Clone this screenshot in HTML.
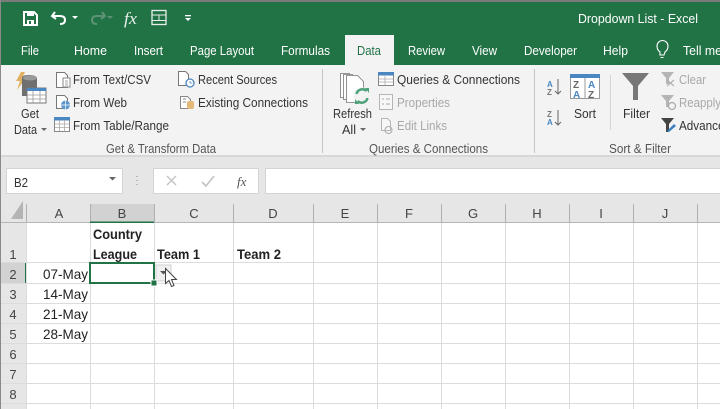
<!DOCTYPE html>
<html><head><meta charset="utf-8"><style>
html,body{margin:0;padding:0;background:#fff;width:720px;height:409px;overflow:hidden}
svg{display:block;filter:blur(.3px)}
text{font-family:"Liberation Sans",sans-serif;font-size:13px;fill:#333}
.w{fill:#fff}.g{fill:#a8a8a8}.l{fill:#555}.c{fill:#222;font-size:14px}.b{fill:#222;font-size:14px;font-weight:bold}.h{fill:#444;font-size:13px}
</style></head><body>
<svg width="720" height="409" viewBox="0 0 720 409" xmlns="http://www.w3.org/2000/svg">
<rect width="720" height="409" fill="#fff"/>
<rect width="720" height="2" fill="#7a7a7a"/>
<rect y="2" width="720" height="63" fill="#217346"/>
<rect x="0" y="0" width="1" height="409" fill="#8a8a8a"/>
<rect x="1" y="65" width="719" height="90" fill="#f3f3f3"/>
<rect x="1" y="155" width="719" height="41" fill="#e6e6e6"/>
<rect x="1" y="155" width="719" height="2" fill="#d8d8d8"/>
<rect x="345" y="35" width="49" height="30" fill="#f3f3f3"/>

<!-- QAT -->
<path d="M24 12h10l3 3v10H24z" fill="none" stroke="#fff" stroke-width="2"/><rect x="27" y="12" width="7" height="4" fill="#fff"/><rect x="27" y="20" width="7" height="5" fill="#fff"/><rect x="29" y="21" width="2" height="3" fill="#217346"/>
<path d="M55 12l-3 4 4 3M53 16h7q5 0 5 4t-5 4" fill="none" stroke="#fff" stroke-width="2"/><path d="M72 16h6l-3 3z" fill="#fff"/>
<path d="M102 12l3 4-4 3M104 16h-7q-5 0-5 4t5 4" fill="none" stroke="#5d9374" stroke-width="2"/><path d="M107 16h6l-3 3z" fill="#5d9374"/>
<text x="124" y="24" textLength="13" lengthAdjust="spacingAndGlyphs" style="font-family:'Liberation Serif',serif;font-style:italic;font-size:17px;fill:#e6efe9">fx</text>
<rect x="152" y="10.500" width="14" height="14" fill="none" stroke="#e6efe9" stroke-width="1.300"/><path d="M152 15h14M152 20.500h14M159 15v5.500" stroke="#e6efe9" stroke-width="1" fill="none"/>
<rect x="185" y="15" width="6" height="1.300" fill="#fff"/><path d="M185 18h6l-3 3z" fill="#fff"/>
<text class="w" x="578" y="23" textLength="120" lengthAdjust="spacingAndGlyphs">Dropdown List  -  Excel</text>

<!-- Tabs -->
<text class="w" x="21" y="55" textLength="18" lengthAdjust="spacingAndGlyphs">File</text>
<text class="w" x="74" y="55" textLength="33" lengthAdjust="spacingAndGlyphs">Home</text>
<text class="w" x="134" y="55" textLength="29" lengthAdjust="spacingAndGlyphs">Insert</text>
<text class="w" x="190" y="55" textLength="64" lengthAdjust="spacingAndGlyphs">Page Layout</text>
<text class="w" x="281" y="55" textLength="49" lengthAdjust="spacingAndGlyphs">Formulas</text>
<text x="357" y="55" textLength="24" lengthAdjust="spacingAndGlyphs" style="fill:#217346">Data</text>
<text class="w" x="408" y="55" textLength="37" lengthAdjust="spacingAndGlyphs">Review</text>
<text class="w" x="472" y="55" textLength="25" lengthAdjust="spacingAndGlyphs">View</text>
<text class="w" x="524" y="55" textLength="53" lengthAdjust="spacingAndGlyphs">Developer</text>
<text class="w" x="603" y="55" textLength="25" lengthAdjust="spacingAndGlyphs">Help</text>
<path d="M660 55h4l1-3q3-2 3-6a5 5 0 0 0-11 0q0 4 3 6zM660.500 57.500h3" fill="none" stroke="#fff" stroke-width="1.100"/>
<text class="w" x="683" y="55" textLength="39" lengthAdjust="spacingAndGlyphs">Tell me</text>

<!-- Get Data icon -->
<path d="M21 72h4l-3 6h4l-9 12 3-9h-4z" fill="#e0b060"/>
<path d="M22 78q0-3 7-3t8 3v18H22z" fill="#6f6f6f"/><ellipse cx="30" cy="78" rx="7" ry="2.500" fill="#9a9a9a"/>
<rect x="27" y="88" width="19" height="15" fill="#fff" stroke="#777"/><rect x="27" y="88" width="19" height="3" fill="#4a86c0"/><path d="M27 95h19M27 99h19M33 91v12M40 91v12" stroke="#999" stroke-width=".8"/>
<text x="21" y="118" textLength="18" lengthAdjust="spacingAndGlyphs">Get</text>
<text x="14" y="134" textLength="23" lengthAdjust="spacingAndGlyphs">Data</text><path d="M41 128h6l-3 3z" fill="#666"/>
<!-- small icons -->
<path d="M56.500 72.500h8l3 3v12h-11z" fill="#fff" stroke="#777"/><rect x="63" y="78" width="7" height="9" fill="#fff" stroke="#888"/><path d="M65 81h3M65 83h3M65 85h3" stroke="#888" stroke-width=".7"/>
<text x="73" y="84" textLength="78" lengthAdjust="spacingAndGlyphs">From Text/CSV</text>
<path d="M56.500 95.500h8l3 3v10h-11z" fill="#fff" stroke="#777"/><circle cx="65.500" cy="105" r="4.500" fill="#5b97cc"/><path d="M61 105h9M65.500 100.500v9" stroke="#fff" stroke-width=".7"/>
<text x="73" y="107" textLength="54" lengthAdjust="spacingAndGlyphs">From Web</text>
<rect x="54.500" y="117.500" width="15" height="14" fill="#fff" stroke="#888"/><rect x="54" y="117" width="16" height="3.500" fill="#4a86c0"/><path d="M55 124h14M55 127.500h14M59.500 120v11M64.500 120v11" stroke="#aaa" stroke-width=".8"/>
<text x="73" y="130" textLength="96" lengthAdjust="spacingAndGlyphs">From Table/Range</text>
<path d="M178.500 71.500h7l3 3v11h-10z" fill="#fff" stroke="#777"/><circle cx="190" cy="83" r="4" fill="#fff" stroke="#4a86c0" stroke-width="1.300"/><path d="M190 81v2h2" stroke="#4a86c0" fill="none" stroke-width=".8"/>
<text x="198" y="84" textLength="79" lengthAdjust="spacingAndGlyphs">Recent Sources</text>
<path d="M180.500 96.500h7l3 3v9h-10z" fill="#fff" stroke="#888"/><path d="M183 99h3M183 102h3" stroke="#888"/><rect x="187" y="101" width="7" height="8" rx="2" fill="#e3b878"/>
<text x="198" y="107" textLength="110" lengthAdjust="spacingAndGlyphs">Existing Connections</text>
<text class="l" x="106" y="153" textLength="110" lengthAdjust="spacingAndGlyphs">Get &amp; Transform Data</text>
<rect x="322" y="69" width="1" height="84" fill="#c6c6c6"/>

<!-- Refresh -->
<path d="M340.500 73.500h9v24h-9z" fill="#fff" stroke="#777" stroke-width=".8"/>
<path d="M343.500 74.500h9v25h-9z" fill="#fff" stroke="#777" stroke-width=".8"/>
<path d="M346.500 75.500h11l6 6v21h-17z" fill="#fff" stroke="#777" stroke-width=".8"/>
<circle cx="362" cy="96" r="8.500" fill="#f3f3f3"/>
<path d="M356.500 94a6 6 0 0 1 10-3M367.500 98a6 6 0 0 1-10 3" fill="none" stroke="#4ea27a" stroke-width="2.500"/><path d="M365 88l4 0v5zM359 104l-4 0v-5z" fill="#4ea27a"/>
<text x="333" y="118" textLength="39" lengthAdjust="spacingAndGlyphs">Refresh</text>
<text x="342" y="134" textLength="14" lengthAdjust="spacingAndGlyphs">All</text><path d="M360 128h6l-3 3z" fill="#666"/>
<rect x="378.500" y="72.500" width="15" height="13" fill="#fff" stroke="#888"/><rect x="378" y="72" width="16" height="3.500" fill="#4a86c0"/><path d="M379 79h14M379 82h14M385 76v9" stroke="#aaa" stroke-width=".8"/>
<text x="397" y="84" textLength="123" lengthAdjust="spacingAndGlyphs">Queries &amp; Connections</text>
<rect x="379.500" y="94.500" width="13" height="15" fill="#f7f7f7" stroke="#b5b5b5"/><path d="M382 99h2M382 104h2M386 99h4M386 104h4" stroke="#aaa"/>
<text class="g" x="397" y="107" textLength="53" lengthAdjust="spacingAndGlyphs">Properties</text>
<path d="M381.500 118.500h6l3 3v9h-9z" fill="#f7f7f7" stroke="#b5b5b5"/><path d="M385 130a2 2 0 0 1 7 0a2 2 0 0 1-7 0" fill="none" stroke="#aaa"/>
<text class="g" x="397" y="130" textLength="50" lengthAdjust="spacingAndGlyphs">Edit Links</text>
<text class="l" x="369" y="153" textLength="119" lengthAdjust="spacingAndGlyphs">Queries &amp; Connections</text>
<rect x="534" y="69" width="1" height="84" fill="#c6c6c6"/>

<!-- Sort -->
<text x="547" y="87" style="font-size:8px;font-weight:bold;fill:#4a86c0">A</text><text x="547" y="95" style="font-size:8px;font-weight:bold;fill:#777">Z</text>
<path d="M558 79v14M555 91l3 3 3-3" fill="none" stroke="#666"/>
<text x="547" y="117" style="font-size:8px;font-weight:bold;fill:#777">Z</text><text x="547" y="125" style="font-size:8px;font-weight:bold;fill:#4a86c0">A</text>
<path d="M558 110v14M555 122l3 3 3-3" fill="none" stroke="#666"/>
<rect x="570.500" y="74.500" width="29" height="24" fill="#fff" stroke="#999"/><rect x="570" y="74" width="30" height="4" fill="#4a86c0"/><path d="M585 78v20" stroke="#999"/>
<text x="573" y="88" style="font-size:10px;font-weight:bold;fill:#666">Z</text><text x="573" y="98" style="font-size:10px;font-weight:bold;fill:#4a86c0">A</text>
<text x="588" y="88" style="font-size:10px;font-weight:bold;fill:#4a86c0">A</text><text x="588" y="98" style="font-size:10px;font-weight:bold;fill:#666">Z</text>
<text x="574" y="118" textLength="22" lengthAdjust="spacingAndGlyphs">Sort</text>
<rect x="610" y="75" width="1" height="55" fill="#d4d4d4"/>
<path d="M622 73h27l-11 13v14h-5V86z" fill="#777"/>
<text x="623" y="118" textLength="27" lengthAdjust="spacingAndGlyphs">Filter</text>
<path d="M661 72h13l-5 6v6h-3v-6z" fill="#b5b5b5"/><path d="M667 80l7 6M674 80l-7 6" stroke="#b0b0b0" stroke-width="1.200"/>
<text class="g" x="679" y="84" textLength="27" lengthAdjust="spacingAndGlyphs">Clear</text>
<path d="M661 95h13l-5 6v6h-3v-6z" fill="#b5b5b5"/><circle cx="672" cy="106" r="3.500" fill="none" stroke="#aaa" stroke-width="1.300"/>
<text class="g" x="679" y="107" textLength="42" lengthAdjust="spacingAndGlyphs">Reapply</text>
<path d="M661 118h13l-5 6v8h-3v-8z" fill="#444"/><path d="M667 131l7-7 2 2-7 6z" fill="#3d80c2"/>
<text x="679" y="130" textLength="52" lengthAdjust="spacingAndGlyphs">Advanced</text>
<text class="l" x="609" y="153" textLength="62" lengthAdjust="spacingAndGlyphs">Sort &amp; Filter</text>

<!-- Formula bar -->
<rect x="6.500" y="168.500" width="116" height="25" fill="#fff" stroke="#d4d4d4"/>
<text x="14" y="187" textLength="14" lengthAdjust="spacingAndGlyphs">B2</text><path d="M109 177h7l-3.500 3.500z" fill="#666"/>
<path d="M137 176v1M137 180v1M137 184v1" stroke="#aaa" stroke-width="1.500"/>
<rect x="153.500" y="168.500" width="105" height="25" fill="#fff" stroke="#d4d4d4"/>
<path d="M167 176l9 9M176 176l-9 9" stroke="#c4c4c4" stroke-width="1.500"/>
<path d="M202 182l4 4 8-10" stroke="#c4c4c4" stroke-width="1.700" fill="none"/>
<text x="237" y="186" style="font-family:'Liberation Serif',serif;font-style:italic;font-size:13px;fill:#555">fx</text>
<rect x="265.500" y="168.500" width="456" height="25" fill="#fff" stroke="#d4d4d4"/>

<!-- Sheet headers -->
<rect x="1" y="196" width="719" height="27" fill="#e6e6e6"/>
<rect x="1" y="223" width="25" height="186" fill="#e6e6e6"/>
<path d="M23 201v18H11z" fill="#b4b4b4"/>
<rect x="90" y="204" width="64" height="18" fill="#d2d2d2"/>
<rect x="1" y="263" width="25" height="20" fill="#d2d2d2"/>
<g fill="#b0b0b0"><rect x="26" y="204" width="1" height="18"/><rect x="90" y="204" width="1" height="18"/><rect x="154" y="204" width="1" height="18"/><rect x="233" y="204" width="1" height="18"/><rect x="313" y="204" width="1" height="18"/><rect x="377" y="204" width="1" height="18"/><rect x="441" y="204" width="1" height="18"/><rect x="505" y="204" width="1" height="18"/><rect x="569" y="204" width="1" height="18"/><rect x="633" y="204" width="1" height="18"/><rect x="697" y="204" width="1" height="18"/></g>
<rect x="1" y="222" width="719" height="1" fill="#b5b5b5"/>
<rect x="90" y="221.500" width="64" height="1.500" fill="#217346"/>
<rect x="25" y="263" width="1.500" height="20" fill="#217346"/>

<!-- Grid -->
<g fill="#dcdcdc"><rect x="26" y="223" width="1" height="186"/><rect x="90" y="223" width="1" height="186"/><rect x="154" y="223" width="1" height="186"/><rect x="233" y="223" width="1" height="186"/><rect x="313" y="223" width="1" height="186"/><rect x="377" y="223" width="1" height="186"/><rect x="441" y="223" width="1" height="186"/><rect x="505" y="223" width="1" height="186"/><rect x="569" y="223" width="1" height="186"/><rect x="633" y="223" width="1" height="186"/><rect x="697" y="223" width="1" height="186"/>
<rect x="1" y="262" width="719" height="1"/><rect x="1" y="283" width="719" height="1"/><rect x="1" y="303" width="719" height="1"/><rect x="1" y="323" width="719" height="1"/><rect x="1" y="343" width="719" height="1"/><rect x="1" y="363" width="719" height="1"/><rect x="1" y="383" width="719" height="1"/><rect x="1" y="403" width="719" height="1"/></g>

<g text-anchor="middle">
<text class="h" x="59" y="218">A</text><text class="h" x="122" y="218">B</text><text class="h" x="194" y="218">C</text><text class="h" x="273" y="218">D</text><text class="h" x="345" y="218">E</text><text class="h" x="409" y="218">F</text><text class="h" x="473" y="218">G</text><text class="h" x="537" y="218">H</text><text class="h" x="601" y="218">I</text><text class="h" x="665" y="218">J</text>
<text class="h" x="13" y="259">1</text><text class="h" x="13" y="279">2</text><text class="h" x="13" y="299">3</text><text class="h" x="13" y="319">4</text><text class="h" x="13" y="339">5</text><text class="h" x="13" y="359">6</text><text class="h" x="13" y="379">7</text><text class="h" x="13" y="399">8</text>
</g>

<!-- Cells -->
<text class="b" x="93" y="239" textLength="49" lengthAdjust="spacingAndGlyphs">Country</text>
<text class="b" x="93" y="259" textLength="44" lengthAdjust="spacingAndGlyphs">League</text>
<text class="b" x="157" y="259" textLength="43" lengthAdjust="spacingAndGlyphs">Team 1</text>
<text class="b" x="237" y="259" textLength="44" lengthAdjust="spacingAndGlyphs">Team 2</text>
<text class="c" x="43" y="279" textLength="45" lengthAdjust="spacingAndGlyphs">07-May</text>
<text class="c" x="43" y="299" textLength="45" lengthAdjust="spacingAndGlyphs">14-May</text>
<text class="c" x="43" y="319" textLength="45" lengthAdjust="spacingAndGlyphs">21-May</text>
<text class="c" x="43" y="339" textLength="45" lengthAdjust="spacingAndGlyphs">28-May</text>

<!-- Selection -->
<rect x="156" y="265" width="15" height="16" fill="#f0f0f0" stroke="#d0d0d0"/>
<path d="M160 271h7l-3.500 3.500z" fill="#555"/>
<rect x="90" y="263" width="64" height="20" fill="none" stroke="#217346" stroke-width="2"/>
<rect x="151" y="280" width="6" height="6" fill="#217346" stroke="#fff"/>
<path d="M165.500 268.500l0 15 3.500-3 2.500 6 2.500-1-2.500-6h5z" fill="#fff" stroke="#444" stroke-width="1"/>
</svg>
</body></html>
